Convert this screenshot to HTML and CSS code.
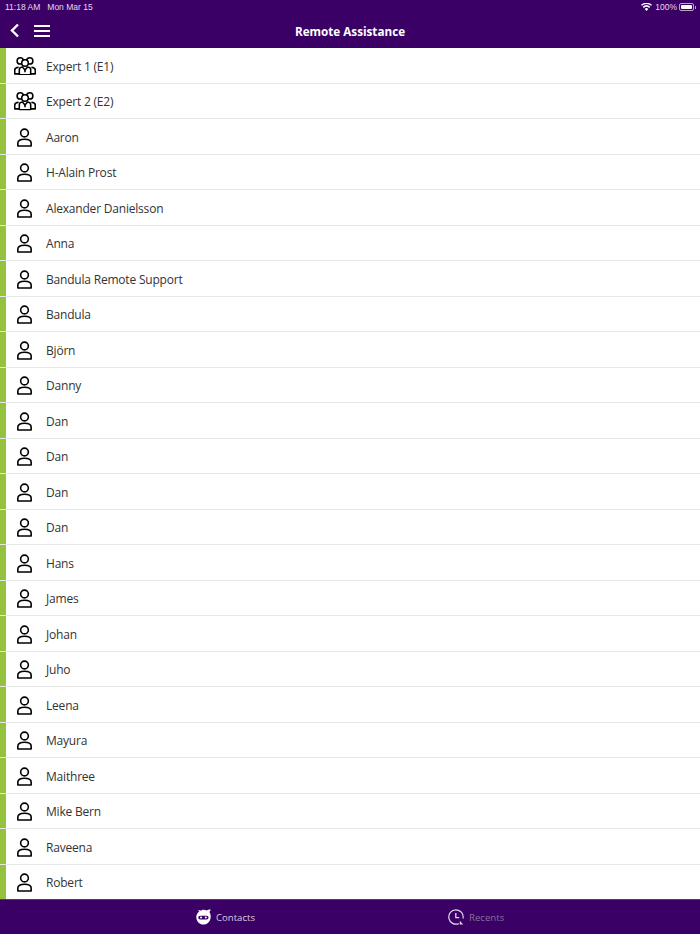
FILE: index.html
```html
<!DOCTYPE html>
<html lang="en">
<head>
    <meta charset="UTF-8">
    <meta name="viewport" content="width=device-width, initial-scale=1.0">
    <title>Remote Assistance</title>
    <link rel="stylesheet" href="styles.css">
</head>
<body>
    <svg class="defs" width="0" height="0">
        <symbol id="person" viewBox="0 0 24 24">
            <circle cx="12" cy="6.300" r="4.900" fill="none" stroke="#000" stroke-width="2"/>
            <path d="M3.600 22.800v-3.900c0-3 3-4.700 8.400-4.700s8.400 1.700 8.400 4.700v3.900z" fill="none" stroke="#000" stroke-width="2" stroke-linejoin="round"/>
        </symbol>
        <symbol id="group" viewBox="0 0 24 20">
            <g fill="none" stroke="#000" stroke-width="1.700">
                <circle cx="6.800" cy="4.200" r="3.400"/>
                <circle cx="17.200" cy="4.200" r="3.400"/>
                <circle cx="12" cy="6.500" r="3.600" fill="#fff"/>
                <path d="M5.800 19.200v-5.600c0-1.500 1.500-2.400 3.400-2.700l2.800 3.200 2.800-3.200c1.900.3 3.400 1.200 3.400 2.700v5.600z" fill="#fff" stroke-linejoin="round"/>
                <path d="M5 11.200c-2.400.3-4.200 1-4.200 2.800v4.300h5M19 11.200c2.400.3 4.200 1 4.200 2.800v4.300h-5M12 14.100v2.400" stroke-linejoin="round"/>
            </g>
        </symbol>
    </svg>

    <div class="page">
        <header class="topbar">
            <div class="statusbar">
                <div class="status-left"><span>11:18 AM</span><span>Mon Mar 15</span></div>
                <div class="status-right">
                    <svg class="wifi" width="11" height="8" viewBox="0 0 11 8">
                        <path d="M5.500 8 3.700 5.900a2.700 2.700 0 0 1 3.600 0zM2.800 4.900 1.700 3.700a5.700 5.700 0 0 1 7.600 0L8.200 4.900a4.200 4.200 0 0 0-5.400 0zM.9 2.800 0 1.800a8.200 8.200 0 0 1 11 0l-.9 1a6.900 6.900 0 0 0-9.200 0z" fill="#fff"/>
                    </svg>
                    <span>100%</span>
                    <div class="battery"><div class="battery-fill"></div></div>
                    <div class="battery-tip"></div>
                </div>
            </div>
            <div class="navbar">
                <div class="nav-left">
                    <svg width="10" height="15" viewBox="0 0 10 15"><path d="M8 1.500 2 7.500l6 6" fill="none" stroke="#fff" stroke-width="2.400"/></svg>
                    <div class="menu-icon"><span></span><span></span><span></span></div>
                </div>
                <h1>Remote Assistance</h1>
            </div>
        </header>

        <main class="list">
            <div class="row"><svg class="group-icon"><use href="#group"/></svg><span>Expert 1 (E1)</span></div>
            <div class="row"><svg class="group-icon"><use href="#group"/></svg><span>Expert 2 (E2)</span></div>
            <div class="row"><svg class="person-icon"><use href="#person"/></svg><span>Aaron</span></div>
            <div class="row"><svg class="person-icon"><use href="#person"/></svg><span>H-Alain Prost</span></div>
            <div class="row"><svg class="person-icon"><use href="#person"/></svg><span>Alexander Danielsson</span></div>
            <div class="row"><svg class="person-icon"><use href="#person"/></svg><span>Anna</span></div>
            <div class="row"><svg class="person-icon"><use href="#person"/></svg><span>Bandula Remote Support</span></div>
            <div class="row"><svg class="person-icon"><use href="#person"/></svg><span>Bandula</span></div>
            <div class="row"><svg class="person-icon"><use href="#person"/></svg><span>Björn</span></div>
            <div class="row"><svg class="person-icon"><use href="#person"/></svg><span>Danny</span></div>
            <div class="row"><svg class="person-icon"><use href="#person"/></svg><span>Dan</span></div>
            <div class="row"><svg class="person-icon"><use href="#person"/></svg><span>Dan</span></div>
            <div class="row"><svg class="person-icon"><use href="#person"/></svg><span>Dan</span></div>
            <div class="row"><svg class="person-icon"><use href="#person"/></svg><span>Dan</span></div>
            <div class="row"><svg class="person-icon"><use href="#person"/></svg><span>Hans</span></div>
            <div class="row"><svg class="person-icon"><use href="#person"/></svg><span>James</span></div>
            <div class="row"><svg class="person-icon"><use href="#person"/></svg><span>Johan</span></div>
            <div class="row"><svg class="person-icon"><use href="#person"/></svg><span>Juho</span></div>
            <div class="row"><svg class="person-icon"><use href="#person"/></svg><span>Leena</span></div>
            <div class="row"><svg class="person-icon"><use href="#person"/></svg><span>Mayura</span></div>
            <div class="row"><svg class="person-icon"><use href="#person"/></svg><span>Maithree</span></div>
            <div class="row"><svg class="person-icon"><use href="#person"/></svg><span>Mike Bern</span></div>
            <div class="row"><svg class="person-icon"><use href="#person"/></svg><span>Raveena</span></div>
            <div class="row"><svg class="person-icon"><use href="#person"/></svg><span>Robert</span></div>
        </main>

        <footer class="tabbar">
            <div class="tab tab-contacts">
                <svg width="15" height="16" viewBox="0 0 15 16">
                    <path d="M3.400 2.600C2.700 2.300 2.300 1.700 2.300 1c1.200.6 2.300.6 3.400.2C7.500.500 9.300.900 10.700 1.500c1-.8 2.700-1.200 4-.9-.1 1-.6 1.800-1.300 2.300.8 1.200 1.300 2.700 1.300 4.500 0 4.700-3.100 8.100-7.200 8.100S.3 12.100.3 7.900c0-2.200 1.200-4.100 3.100-5.300z" fill="#fff"/>
                    <rect x="2.300" y="6.700" width="10.200" height="3.800" rx="1.900" fill="#3a0066"/>
                    <circle cx="5" cy="8.600" r="1" fill="#fff"/>
                    <circle cx="9.800" cy="8.600" r="1" fill="#fff"/>
                </svg>
                <span>Contacts</span>
            </div>
            <div class="tab tab-recents">
                <svg width="16" height="16" viewBox="0 0 16 16">
                    <path d="M10.800 14.600A7.200 7.200 0 1 1 15 9.500" fill="none" stroke="#fff" stroke-width="1.200"/>
                    <path d="M7.800 4v4.600h3.400" fill="none" stroke="#fff" stroke-width="1.300"/>
                    <path d="M11.800 11.800v3.800h3.400z" fill="#fff"/>
                </svg>
                <span>Recents</span>
            </div>
        </footer>
    </div>
</body>
</html>
```

FILE: styles.css
```css
* {
    box-sizing: border-box;
}
body {
    font-family: "Open Sans", sans-serif;
    background-color: #fff;
    color: #333;
    margin: 0;
    padding: 0;
}
.defs {
    display: block;
    height: 0;
}
.page {
    height: 934px;
    display: flex;
    flex-direction: column;
    overflow: hidden;
}
.topbar {
    background-color: #3a0066;
    color: #fff;
    height: 48px;
    flex: none;
}
.statusbar {
    height: 13px;
    padding: 1px 4px 0 5px;
    display: flex;
    justify-content: space-between;
    align-items: center;
    font-family: "Liberation Sans", sans-serif;
    font-size: 8.500px;
    color: #e6dcee;
}
.status-left {
    display: flex;
    gap: 7px;
}
.status-right {
    display: flex;
    align-items: center;
    gap: 2px;
}
.wifi {
    margin-right: 1px;
}
.battery {
    width: 15px;
    height: 8px;
    border: 1px solid #b9a3cb;
    border-radius: 2px;
    padding: 1px;
}
.battery-fill {
    height: 100%;
    background-color: #fff;
    border-radius: 1px;
}
.battery-tip {
    width: 1px;
    height: 3px;
    margin-left: -1px;
    background-color: #b9a3cb;
}
.navbar {
    height: 35px;
    padding-top: 1px;
    display: flex;
    align-items: center;
    justify-content: center;
    position: relative;
}
.nav-left {
    position: absolute;
    left: 10px;
    top: 10px;
    display: flex;
    align-items: center;
    gap: 14px;
}
.menu-icon {
    width: 16px;
    display: flex;
    flex-direction: column;
    gap: 3px;
}
.menu-icon span {
    display: block;
    height: 2px;
    background-color: #fff;
}
h1 {
    font-size: 11.700px;
    font-weight: 700;
    margin: 0;
}
.list {
    flex: 1;
    overflow: hidden;
}
.row {
    height: 35.52px;
    display: flex;
    align-items: center;
    font-size: 12px;
    letter-spacing: -0.2px;
    border-left: 6px solid #95c23d;
    position: relative;
    padding-top: .6px;
}
.row::after {
    content: "";
    position: absolute;
    left: -6px;
    right: 0;
    bottom: 0;
    height: 1px;
    background-color: #e8e8e8;
}
.group-icon {
    width: 22px;
    height: 18.500px;
    margin-left: 8px;
    margin-right: 10px;
}
.person-icon {
    width: 19px;
    height: 19px;
    margin-left: 9px;
    margin-right: 12px;
}
.tabbar {
    height: 35px;
    flex: none;
    background-color: #3a0066;
    border-top: 1px solid #5c3384;
    display: flex;
    font-size: 9.600px;
}
.tab {
    display: flex;
    align-items: center;
    gap: 5px;
}
.tab-contacts {
    margin-left: 196px;
    color: #d8cbe3;
}
.tab-recents {
    margin-left: 193px;
    color: #85709b;
}
.tab-recents svg {
    opacity: .85;
}
```
